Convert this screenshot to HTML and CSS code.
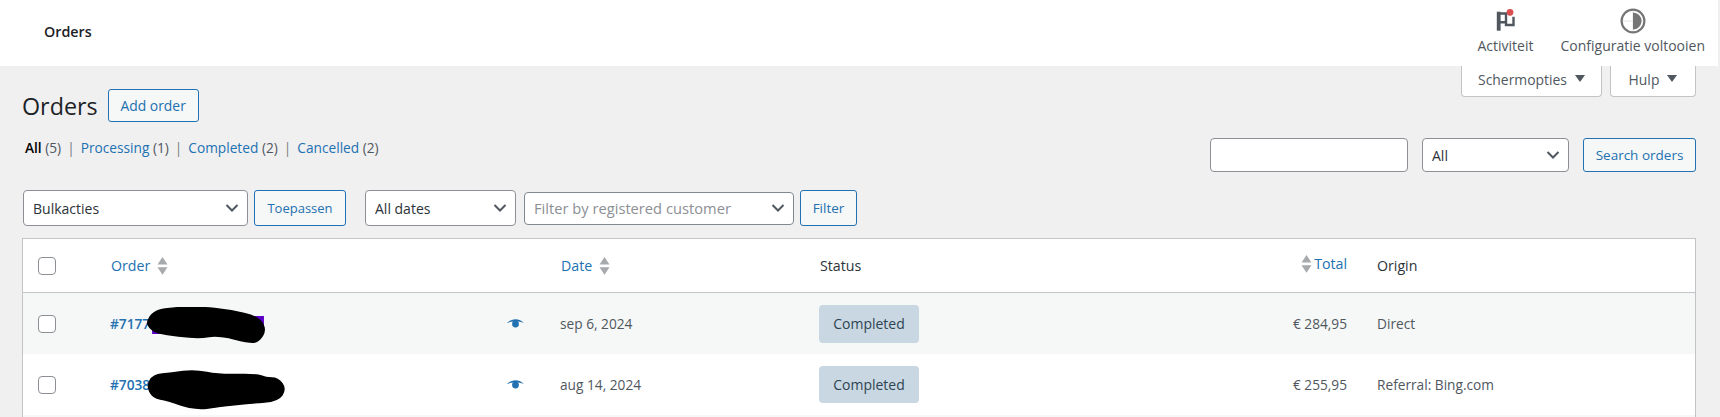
FILE: index.html
```html
<!DOCTYPE html>
<html lang="en">
<head>
<meta charset="utf-8">
<title>Orders</title>
<link rel="stylesheet" href="styles.css">
</head>
<body>
<header class="topbar">
  <h2 class="topbar-title">Orders</h2>
  <div class="activity">
    <div class="activity-item act">
      <svg width="30" height="30" viewBox="0 0 30 30"><path d="M8.700 24.700V5.700" fill="none" stroke="#50575e" stroke-width="3.800"/><path d="M8 7.500H16V16.200H8M16 15V19H23.500V10.700" fill="none" stroke="#50575e" stroke-width="2.400"/><circle cx="20" cy="6.300" r="3.400" fill="#d94f4f"/></svg>
      <span>Activiteit</span>
    </div>
    <div class="activity-item conf">
      <svg width="30" height="30" viewBox="0 0 30 30"><path d="M4 15H26M15 4V26" stroke="#e4e4e4" stroke-width="1"/><circle cx="15" cy="15" r="11.400" fill="none" stroke="#757575" stroke-width="2.200"/><path d="M15 6.400A8.600 8.600 0 0 1 15 23.600Z" fill="#757575"/></svg>
      <span>Configuratie voltooien</span>
    </div>
  </div>
</header>
<div class="screen-meta">
  <button class="meta-tab tab-screen">Schermopties<i class="caret"></i></button>
  <button class="meta-tab tab-help">Hulp<i class="caret"></i></button>
</div>
<main class="wrap">
  <div class="title-row">
    <h1 class="page-title">Orders</h1>
    <a class="btn add-order">Add order</a>
  </div>
  <div class="views-row">
    <ul class="views">
      <li><b>All</b> <span class="count">(5)</span></li>
      <li class="sep">|</li>
      <li><a>Processing</a> <span class="count">(1)</span></li>
      <li class="sep">|</li>
      <li><a>Completed</a> <span class="count">(2)</span></li>
      <li class="sep">|</li>
      <li><a>Cancelled</a> <span class="count">(2)</span></li>
    </ul>
    <form class="search">
      <input class="field search-input" type="text" aria-label="Search">
      <select class="field search-select"><option>All</option></select>
      <button type="button" class="btn search-btn">Search orders</button>
    </form>
  </div>
  <div class="tablenav">
    <select class="field bulk"><option>Bulkacties</option></select>
    <button type="button" class="btn apply">Toepassen</button>
    <select class="field dates"><option>All dates</option></select>
    <select class="field customer"><option>Filter by registered customer</option></select>
    <button type="button" class="btn filter">Filter</button>
  </div>
  <table class="orders">
    <thead>
      <tr>
        <th class="c-check"><span class="checkbox"></span></th>
        <th class="c-order"><a class="sort">Order<svg class="arrows" width="11" height="18" viewBox="0 0 11 18"><path d="M5.500 0L10.500 7.600H.5ZM.5 10.200H10.500L5.500 17.800Z"/></svg></a></th>
        <th class="c-eye"></th>
        <th class="c-date"><a class="sort">Date<svg class="arrows" width="11" height="18" viewBox="0 0 11 18"><path d="M5.500 0L10.500 7.600H.5ZM.5 10.200H10.500L5.500 17.800Z"/></svg></a></th>
        <th class="c-status">Status</th>
        <th class="c-total"><a class="sort"><svg class="arrows left" width="11" height="18" viewBox="0 0 11 18"><path d="M5.500 0L10.500 7.600H.5ZM.5 10.200H10.500L5.500 17.800Z"/></svg>Total</a></th>
        <th class="c-origin">Origin</th>
      </tr>
    </thead>
    <tbody>
      <tr class="alt">
        <td class="c-check"><span class="checkbox"></span></td>
        <td class="c-order"><a class="order-link">#7177</a><span class="redact"><svg class="scribble one" width="120" height="37" viewBox="0 0 118 37" preserveAspectRatio="none"><rect x="5" y="9" width="110" height="18" fill="#5a00c8"/><path d="M1 17.500Q0 15 3 10Q6 5 13 3Q20 1 36 .5Q52 0 66.500 1.500Q81 3 95.500 6.500Q110 10 113.500 16.500Q117 23 113.500 28.500Q110 34 106 35Q102 36 86 32Q70 28 61 29.500Q52 31 41.500 30Q31 29 20 27.500Q9 26 5.500 23Q2 20 1 17.500Z" stroke="#000" stroke-width="1.500"/></svg></span></td>
        <td class="c-eye"><svg class="eye" width="17" height="10" viewBox="0 0 17 10"><path d="M0 4C3 1.200 5.600 .2 8.500 .2s5.500 1 8.500 3.800C14 3 12 2.600 8.500 2.600S3 3 0 4Z"/><circle cx="8.500" cy="5" r="3.400"/></svg></td>
        <td class="c-date">sep 6, 2024</td>
        <td class="c-status"><span class="badge">Completed</span></td>
        <td class="c-total">€ 284,95</td>
        <td class="c-origin">Direct</td>
      </tr>
      <tr>
        <td class="c-check"><span class="checkbox"></span></td>
        <td class="c-order"><a class="order-link">#7038</a><span class="redact"><svg class="scribble two" width="140" height="41" viewBox="0 0 138 41" preserveAspectRatio="none"><path d="M3 22Q0 16 3 10.500Q6 5 15 4Q24 3 35.500 1.500Q47 0 59 2.500Q71 5 89.500 4.500Q108 4 112.500 6Q117 8 123 8Q129 8 133 13.500Q137 19 133 25Q129 31 116 32Q103 33 88.500 34.500Q74 36 60.500 38Q47 40 33.500 35Q20 30 13 29Q6 28 3 22Z" stroke="#000" stroke-width="1.500"/></svg></span></td>
        <td class="c-eye"><svg class="eye" width="17" height="10" viewBox="0 0 17 10"><path d="M0 4C3 1.200 5.600 .2 8.500 .2s5.500 1 8.500 3.800C14 3 12 2.600 8.500 2.600S3 3 0 4Z"/><circle cx="8.500" cy="5" r="3.400"/></svg></td>
        <td class="c-date">aug 14, 2024</td>
        <td class="c-status"><span class="badge">Completed</span></td>
        <td class="c-total">€ 255,95</td>
        <td class="c-origin">Referral: Bing.com</td>
      </tr>
      <tr class="alt"><td colspan="7" class="filler"></td></tr>
    </tbody>
  </table>
</main>
</body>
</html>
```
FILE: styles.css
```css
* { box-sizing: border-box; }
html, body { margin: 0; height: 417px; overflow: hidden; }
body {
  background: #f0f0f1;
  color: #50575e;
  font: 13.7px/20px "Open Sans", "Liberation Sans", sans-serif;
}
a { color: #2271b1; text-decoration: none; }

.topbar {
  height: 66px;
  margin-right: 2px;
  background: #fff;
  display: flex;
  align-items: center;
  justify-content: space-between;
  position: relative;
  z-index: 2;
}
.topbar-title { margin: 0 0 2px 44px; font-size: 14.3px; font-weight: 600; color: #1d2327; }
.activity { display: flex; height: 66px; }
.activity-item {
  display: flex;
  flex-direction: column;
  align-items: center;
  color: #50575e;
  padding-top: 6px;
  font-size: 14px;
}
.activity-item span { line-height: 20px; white-space: nowrap; }
.act { margin-right: 27px; }
.conf { margin-right: 13px; }

.screen-meta {
  height: 31px;
  margin-right: 24px;
  display: flex;
  justify-content: flex-end;
  gap: 8px;
}
.meta-tab {
  height: 31px;
  font: inherit;
  font-size: 13.9px;
  color: #50575e;
  background: #fff;
  border: 1px solid #c3c4c7;
  border-top: 0;
  border-radius: 0 0 4px 4px;
  display: flex;
  align-items: center;
  justify-content: center;
  padding: 0 0 2px;
}
.tab-screen { width: 141px; }
.tab-help { width: 86px; }
.caret {
  width: 0;
  height: 0;
  margin-left: 8px;
  margin-top: -3px;
  border: 5px solid transparent;
  border-top: 7px solid #50575e;
  border-bottom: 0;
}

.wrap { padding: 0 24px 0 22px; margin-top: -8px; }

.title-row { display: flex; align-items: center; height: 33px; gap: 10px; }
.page-title { margin: 0; font-size: 23.3px; font-weight: 400; line-height: 30px; color: #1d2327; }

.btn {
  display: inline-flex;
  align-items: center;
  justify-content: center;
  font: inherit;
  font-size: 13.5px;
  color: #2271b1;
  background: #f6f7f7;
  border: 1px solid #2271b1;
  border-radius: 3px;
  padding: 0;
}
.add-order { width: 91px; height: 33px; font-size: 13.9px; }

.views-row {
  display: flex;
  justify-content: space-between;
  align-items: flex-start;
  margin-top: 16px;
  height: 34px;
}
.views {
  list-style: none;
  margin: 0 0 0 3px;
  padding: 0;
  display: flex;
  gap: 6px;
  color: #50575e;
}
.views b { color: #000; font-weight: 600; }
.sep { color: #787c82; }

.field {
  font: inherit;
  font-size: 14px;
  color: #2c3338;
  background-color: #fff;
  border: 1px solid #8c8f94;
  border-radius: 4px;
  padding: 2px 24px 0 9px;
  margin: 0;
  appearance: none;
  -webkit-appearance: none;
}
select.field {
  background-image: url("data:image/svg+xml,%3Csvg xmlns='http://www.w3.org/2000/svg' width='14' height='8' viewBox='0 0 14 8'%3E%3Cpath d='M1.500 1L7 6.500 12.500 1' fill='none' stroke='%2350575e' stroke-width='2'/%3E%3C/svg%3E");
  background-repeat: no-repeat;
  background-position: right 8px center;
}
.search { display: flex; gap: 14px; }
.search-input { width: 198px; height: 34px; }
.search-select { width: 147px; height: 34px; }
.search-btn { width: 113px; height: 34px; }

.tablenav {
  display: flex;
  align-items: center;
  margin-top: 18px;
  height: 36px;
  padding-left: 1px;
}
.bulk { width: 225px; height: 36px; }
.apply { width: 92px; height: 36px; margin-left: 6px; font-size: 13px; }
.dates { width: 151px; height: 36px; margin-left: 19px; }
.customer { width: 270px; height: 33px; margin-left: 8px; padding-top: 0; border-color: #7e8993; color: #8c8f94; font-size: 14.7px; }
.filter { width: 57px; height: 36px; margin-left: 6px; }

.orders {
  width: 1674px;
  margin-top: 12px;
  border: 1px solid #c3c4c7;
  border-bottom: 0;
  border-collapse: separate;
  border-spacing: 0;
  background: #fff;
  table-layout: fixed;
}
.orders th {
  height: 54px;
  font-weight: 400;
  text-align: left;
  color: #2c3338;
  font-size: 14.2px;
  border-bottom: 1px solid #c3c4c7;
  padding: 0;
  background: #fff;
}
.orders td { height: 61px; padding: 0; vertical-align: middle; }
.orders .alt td { background: #f6f7f7; }
.orders td.filler { height: 2px; }

.c-check { width: 88px; padding-left: 15px !important; }
.c-order { width: 372px; }
.c-eye { width: 77px; }
.c-date { width: 259px; }
.c-status { width: 319px; }
.c-total { width: 209px; text-align: right; }
.orders th.c-total { text-align: right; }
.orders th.c-date, .orders th.c-status { padding-left: 1px; }
.c-origin { padding-left: 30px !important; }

.checkbox {
  display: block;
  width: 18px;
  height: 18px;
  background: #fff;
  border: 1px solid #8c8f94;
  border-radius: 4px;
}
.sort { display: inline-flex; align-items: center; }
.arrows { margin-left: 7px; fill: #a7aaad; }
.arrows.left { margin: 0 2px 0 0; }

.order-link { font-weight: 600; margin-left: -1px; }
.redact { position: relative; display: inline-block; width: 0; height: 20px; vertical-align: top; }
.scribble { position: absolute; left: -3px; }
.scribble.one { top: -7px; }
.scribble.two { top: -5px; }
.eye { display: block; margin-left: 24px; fill: #2271b1; margin-top: 1px; }

.badge {
  display: inline-flex;
  align-items: center;
  justify-content: center;
  width: 100px;
  height: 38px;
  background: #c8d7e1;
  color: #2e4453;
  border-radius: 4px;
  font-size: 14px;
}
tbody tr:not(.alt) .badge { height: 37px; }
```
